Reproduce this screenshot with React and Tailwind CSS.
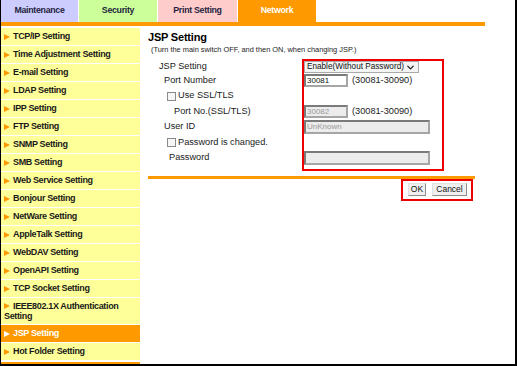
import { ChevronDown } from 'lucide-react'

const menu = [
  'TCP/IP Setting', 'Time Adjustment Setting', 'E-mail Setting', 'LDAP Setting', 'IPP Setting',
  'FTP Setting', 'SNMP Setting', 'SMB Setting', 'Web Service Setting', 'Bonjour Setting',
  'NetWare Setting', 'AppleTalk Setting', 'WebDAV Setting', 'OpenAPI Setting', 'TCP Socket Setting',
]

const Arrow = ({ white }) => (
  <span className={white
    ? 'inline-block w-0 h-0 border-y-[3.5px] border-y-transparent border-l-[6px] border-l-white mr-[3px]'
    : 'inline-block w-0 h-0 border-y-[3.5px] border-y-transparent border-l-[6px] border-l-[#ff9900] mr-[3px]'} />
)

const Item = ({ label }) => (
  <div className="h-[17px] mb-px bg-[#ffff99] pl-[3px] flex items-center">
    <Arrow />
    <span>{label}</span>
  </div>
)

const Box = ({ w, disabled, children }) => (
  <div className={`${w} h-[13px] border-2 border-[#a6a6a6] border-t-[#7a7a7a] border-l-[#7a7a7a] flex items-center pl-[1px] text-[8px] leading-none ${disabled ? 'bg-[#ececec] text-[#9a9a9a]' : 'bg-white text-[#111]'}`}>
    {children}
  </div>
)

const Check = () => (
  <span className="inline-block w-[9px] h-[9px] border border-[#8a8a8a] bg-[#f6f6f6] mr-[2px]" />
)

export default function App() {
  return (
    <div className="w-[517px] h-[366px] bg-white border-l border-r-2 border-b-2 border-black flex flex-col font-['Liberation_Sans',Arial,sans-serif] overflow-hidden">
      {/* tabs */}
      <div className="flex h-[22px] gap-px text-[8.8px] font-bold text-[#1f1f40] tracking-[-0.3px]">
        <div className="w-[77px] bg-[#ccccff] flex items-center justify-center">Maintenance</div>
        <div className="w-[78px] bg-[#ccff99] flex items-center justify-center">Security</div>
        <div className="w-[79px] bg-[#ffcccc] flex items-center justify-center">Print Setting</div>
        <div className="w-[78px] bg-[#ff9900] text-white flex items-center justify-center">Network</div>
      </div>
      <div className="h-[4px] w-[484px] bg-[#ff9900]" />

      <div className="flex flex-1 min-h-0">
        {/* side menu */}
        <div className="w-[139px] pt-[2px] flex flex-col text-[9px] font-bold tracking-[-0.35px] text-[#1a1a1a]">
          {menu.map((m) => <Item key={m} label={m} />)}
          <div className="h-[26px] mb-px bg-[#ffff99] pl-[3px] py-[3px] leading-[10px]">
            <Arrow />IEEE802.1X Authentication<br />Setting
          </div>
          <div className="h-[17px] mb-px bg-[#ff9900] text-white pl-[3px] flex items-center">
            <Arrow white />
            <span>JSP Setting</span>
          </div>
          <Item label="Hot Folder Setting" />
          <div className="flex-1 mt-px bg-[#ff9900]" />
        </div>

        {/* content */}
        <div className="flex-1 pl-[8px] text-[#1a1a1a]">
          <div className="mt-[5px] text-[11px] font-bold leading-[12px] text-black tracking-[-0.2px]">JSP Setting</div>
          <div className="mt-[2px] pl-[3px] text-[7.4px] leading-[10px] text-[#222]">(Turn the main switch OFF, and then ON, when changing JSP.)</div>

          <div className="mt-[4px] flex text-[9.2px]">
            <div className="w-[154px] pt-[2px] flex flex-col">
              <div className="h-[12px] flex items-center pl-[11px]">JSP Setting</div>
              <div className="h-[15px] flex items-center pl-[16px]">Port Number</div>
              <div className="h-[16px] flex items-center pl-[19px]"><Check />Use SSL/TLS</div>
              <div className="h-[15px] flex items-center pl-[26px]">Port No.(SSL/TLS)</div>
              <div className="h-[16px] flex items-center pl-[16px]">User ID</div>
              <div className="h-[15px] flex items-center pl-[19px]"><Check />Password is changed.</div>
              <div className="h-[16px] flex items-center pl-[21px]">Password</div>
            </div>

            <div className="w-[142px] border-2 border-[#ee0000] pb-[3px] flex flex-col">
              <div className="h-[12px] flex items-start">
                <div className="w-[115px] h-[12px] border border-[#a9a9a9] bg-[#f4f4f4] flex items-center justify-between pl-[2px] pr-[2px] text-[8.2px] leading-none text-[#111] whitespace-nowrap">
                  <span>Enable(Without Password)</span>
                  <ChevronDown size={11} strokeWidth={2.5} className="shrink-0" />
                </div>
              </div>
              <div className="h-[15px] flex items-start gap-[4px] pt-px">
                <Box w="w-[44px]">30081</Box>
                <span>(30081-30090)</span>
              </div>
              <div className="h-[16px]" />
              <div className="h-[15px] flex items-center gap-[4px]">
                <Box w="w-[44px]" disabled>30082</Box>
                <span>(30081-30090)</span>
              </div>
              <div className="h-[16px] flex items-center">
                <div className="w-[126px] h-[14px] border-2 border-[#a6a6a6] border-t-[#7a7a7a] border-l-[#7a7a7a] bg-[#ececec] text-[#9a9a9a] text-[8px] pl-[1px] flex items-center leading-none">UnKnown</div>
              </div>
              <div className="h-[15px]" />
              <div className="h-[16px] flex items-center">
                <div className="w-[126px] h-[14px] border-2 border-[#a6a6a6] border-t-[#7a7a7a] border-l-[#7a7a7a] bg-[#ececec]" />
              </div>
            </div>
          </div>

          <div className="mt-[5px] w-[327px] h-[3px] bg-[#ff9900]" />
          <div className="w-[327px] flex justify-end pr-[2px]">
            <div className="border-2 border-[#ee0000] pt-[2px] pb-[3px] pl-[5px] pr-[4px] flex gap-[6px] text-[8.5px] text-[#111]">
              <div className="h-[13px] w-[18px] bg-[#efefef] border border-[#8c8c8c] border-t-[#e0e0e0] border-l-[#e0e0e0] flex items-center justify-center leading-none">OK</div>
              <div className="h-[13px] w-[35px] bg-[#efefef] border border-[#8c8c8c] border-t-[#e0e0e0] border-l-[#e0e0e0] flex items-center justify-center leading-none">Cancel</div>
            </div>
          </div>
        </div>
      </div>
    </div>
  )
}
